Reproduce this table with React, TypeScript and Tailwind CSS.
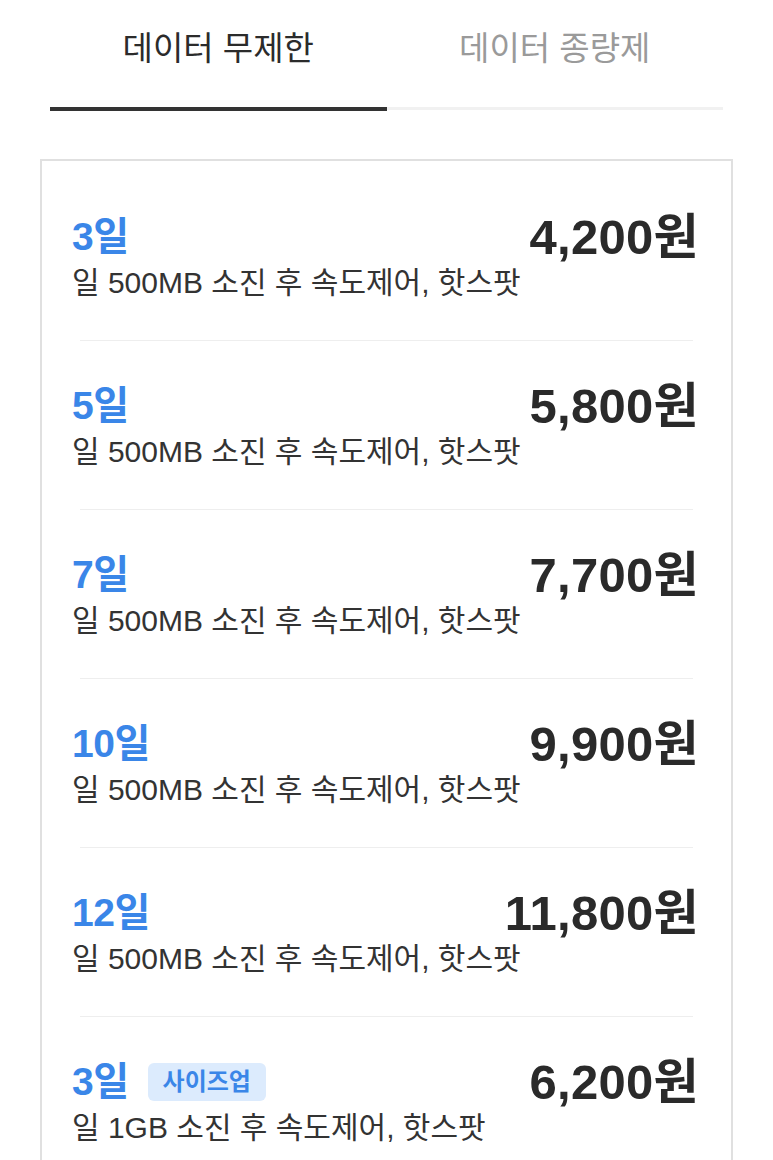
import React from "react";

const rows = [
  { day: "3일", desc: "일 500MB 소진 후 속도제어, 핫스팟", price: "4,200원" },
  { day: "5일", desc: "일 500MB 소진 후 속도제어, 핫스팟", price: "5,800원" },
  { day: "7일", desc: "일 500MB 소진 후 속도제어, 핫스팟", price: "7,700원" },
  { day: "10일", desc: "일 500MB 소진 후 속도제어, 핫스팟", price: "9,900원" },
  { day: "12일", desc: "일 500MB 소진 후 속도제어, 핫스팟", price: "11,800원" },
  { day: "3일", desc: "일 1GB 소진 후 속도제어, 핫스팟", price: "6,200원", badge: "사이즈업" },
];

export default function App() {
  return (
    <div
      className="w-[773px] min-h-[1160px] bg-white text-[#333]"
      style={{ fontFamily: '"Liberation Sans", "Noto Sans CJK KR", sans-serif' }}
    >
      <div className="mx-[50px] flex">
        <div className="flex-1 flex flex-col items-center">
          <div className="h-[107px] pt-[30px] text-[33px] leading-[38px] text-[#2b2b2b]">데이터 무제한</div>
          <div className="h-[4px] w-full bg-[#333]" />
        </div>
        <div className="flex-1 flex flex-col items-center">
          <div className="h-[107px] pt-[30px] text-[33px] leading-[38px] text-[#9a9a9a]">데이터 종량제</div>
          <div className="h-[3px] w-full bg-[#f1f1f1]" />
        </div>
      </div>

      <div className="mx-[40px] mt-[48px] border-2 border-[#e0e0e0] pt-[11px]">
        {rows.map((r, i) => (
          <div key={i}>
            {i > 0 && <div className="mx-[38px] h-px bg-[#eeeeee]" />}
            <div className="pl-[30px] pr-[32px] pt-[45px] pb-[40px]">
              <div className="flex h-[40px] items-center justify-between">
                <div className="flex items-center gap-[19px]">
                  <span className="text-[39px] font-bold leading-[40px] text-[#3a86e8] tracking-[-0.5px]">{r.day}</span>
                  {r.badge && (
                    <span className="rounded-[6px] bg-[#dcebfd] px-[15px] h-[38px] flex items-center text-[24px] font-semibold text-[#3a86e8]">
                      {r.badge}
                    </span>
                  )}
                </div>
                <span className="text-[49px] font-bold leading-[40px] text-[#2a2a2a] tracking-[0.3px]">{r.price}</span>
              </div>
              <div className="mt-[9px] text-[30px] leading-[34px] text-[#333]">{r.desc}</div>
            </div>
          </div>
        ))}
      </div>
    </div>
  );
}
